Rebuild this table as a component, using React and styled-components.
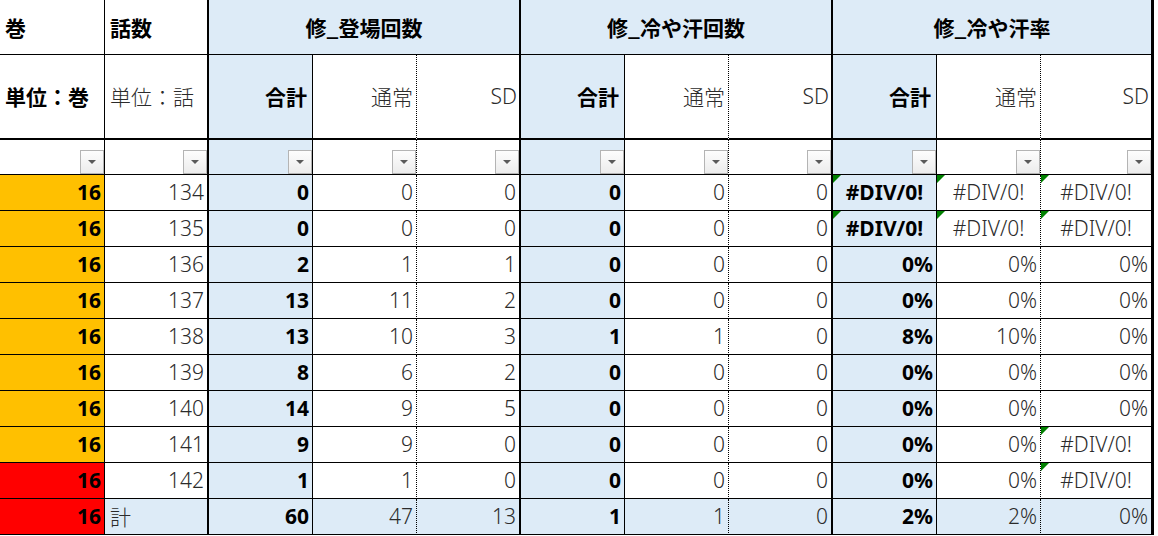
import React from 'react'
import styled, {createGlobalStyle} from 'styled-components'

const GlobalStyle = createGlobalStyle`
body{
  margin:0;
  background:#fff;
  font-family:"Noto Sans","Noto Sans CJK JP",sans-serif;
}
`

const BLUE = '#DDEBF7'
const ORANGE = '#FFC000'
const RED = '#FF0000'

const Sheet = styled.div`
display:grid;
grid-template-columns:105px repeat(9,104px) 113px;
grid-template-rows:55px 85px 35px repeat(10,36px);
width:1154px;
`

const edges = {
  thin:'1px solid #000',
  thick:'2px solid #000',
  heavy:'3px solid #000',
  dot:'1px dotted #000',
}

const justify = {left:'flex-start', center:'center', right:'flex-end'}

const Cell = styled.div`
box-sizing:border-box;
position:relative;
display:flex;
align-items:center;
justify-content:${p => justify[p.$align || 'right']};
padding-left:${p => p.$align === 'left' ? '5px' : '0'};
padding-right:${p => (p.$align || 'right') === 'right' ? (p.$pr ?? 3) + 'px' : '0'};
grid-column:span ${p => p.$span || 1};
background:${p => p.$bg || '#fff'};
border-right:${p => edges[p.$edge || 'thin']};
border-bottom:${p => p.$bottom === 'thick' ? '2px solid #000' : '1px solid #000'};
font-size:21px;
line-height:1;
font-weight:${p => p.$bold ? 700 : 300};
color:${p => p.$bold ? '#000' : '#2b2b2b'};
white-space:nowrap;
`

const HeadCell = styled(Cell)`
font-family:"Noto Sans CJK JP",sans-serif;
font-size:21px;
`

const FilterCell = styled(Cell)`
align-items:flex-end;
justify-content:flex-end;
padding:0;
`

const FilterButton = styled.div`
box-sizing:border-box;
width:24px;
height:24px;
border:1px solid #b4b4b4;
background:linear-gradient(#fdfdfd,#ececec);
display:flex;
align-items:center;
justify-content:center;
&::after{
  content:'';
  border-left:4px solid transparent;
  border-right:4px solid transparent;
  border-top:4px solid #5a5a5a;
}
`

const ErrorMark = styled.span`
position:absolute;
top:0;
left:0;
width:0;
height:0;
border-top:8px solid #008000;
border-right:8px solid transparent;
`

const colEdges = ['thin','thick','thin','dot','thick','thin','dot','thick','thin','dot','heavy']
const sumCols = [2,5,8]

const rows = [
  {vol:16,ep:134,c:ORANGE,v:[0,0,0,0,0,0,'#DIV/0!','#DIV/0!','#DIV/0!'],err:[6,7,8]},
  {vol:16,ep:135,c:ORANGE,v:[0,0,0,0,0,0,'#DIV/0!','#DIV/0!','#DIV/0!'],err:[6,7,8]},
  {vol:16,ep:136,c:ORANGE,v:[2,1,1,0,0,0,'0%','0%','0%']},
  {vol:16,ep:137,c:ORANGE,v:[13,11,2,0,0,0,'0%','0%','0%']},
  {vol:16,ep:138,c:ORANGE,v:[13,10,3,1,1,0,'8%','10%','0%']},
  {vol:16,ep:139,c:ORANGE,v:[8,6,2,0,0,0,'0%','0%','0%']},
  {vol:16,ep:140,c:ORANGE,v:[14,9,5,0,0,0,'0%','0%','0%']},
  {vol:16,ep:141,c:ORANGE,v:[9,9,0,0,0,0,'0%','0%','#DIV/0!'],err:[8]},
  {vol:16,ep:142,c:RED,v:[1,1,0,0,0,0,'0%','0%','#DIV/0!'],err:[8]},
]

const total = [60,47,13,1,1,0,'2%','2%','0%']

const groups = ['修_登場回数','修_冷や汗回数','修_冷や汗率']

const App = () => {
  return (
    <>
      <GlobalStyle/>
      <Sheet>
        <HeadCell $align="left" $bold>巻</HeadCell>
        <HeadCell $align="left" $bold $edge="thick">話数</HeadCell>
        {groups.map((g,i) => (
          <HeadCell key={g} $span={3} $align="center" $bold $bg={BLUE} $edge={i === 2 ? 'heavy' : 'thick'}>{g}</HeadCell>
        ))}

        <HeadCell $align="left" $bold $bottom="thick">単位：巻</HeadCell>
        <HeadCell $align="left" $bottom="thick" $edge="thick">単位：話</HeadCell>
        {groups.map((g,i) => (
          <React.Fragment key={g}>
            <HeadCell $bold $bg={BLUE} $bottom="thick" $pr={5}>合計</HeadCell>
            <HeadCell $bottom="thick" $edge="dot">通常</HeadCell>
            <Cell $bottom="thick" $edge={i === 2 ? 'heavy' : 'thick'} $pr={2}>SD</Cell>
          </React.Fragment>
        ))}

        {colEdges.map((e,i) => (
          <FilterCell key={i} $edge={e} $bg={sumCols.includes(i) ? BLUE : '#fff'}>
            <FilterButton/>
          </FilterCell>
        ))}

        {rows.map(r => (
          <React.Fragment key={r.ep}>
            <Cell $bold $bg={r.c}>{r.vol}</Cell>
            <Cell $edge="thick">{r.ep}</Cell>
            {r.v.map((val,j) => {
              const col = j + 2
              const isErr = typeof val === 'string' && val.startsWith('#')
              return (
                <Cell
                  key={j}
                  $edge={colEdges[col]}
                  $bold={sumCols.includes(col)}
                  $bg={sumCols.includes(col) ? BLUE : '#fff'}
                  $align={isErr ? 'center' : 'right'}
                >
                  {r.err && r.err.includes(j) && <ErrorMark/>}
                  {val}
                </Cell>
              )
            })}
          </React.Fragment>
        ))}

        <Cell $bold $bg={RED}>16</Cell>
        <HeadCell $align="left" $edge="thick" $bg={BLUE}>計</HeadCell>
        {total.map((val,j) => (
          <Cell key={j} $edge={colEdges[j + 2]} $bold={sumCols.includes(j + 2)} $bg={BLUE}>{val}</Cell>
        ))}
      </Sheet>
    </>
  )
}

export default App
